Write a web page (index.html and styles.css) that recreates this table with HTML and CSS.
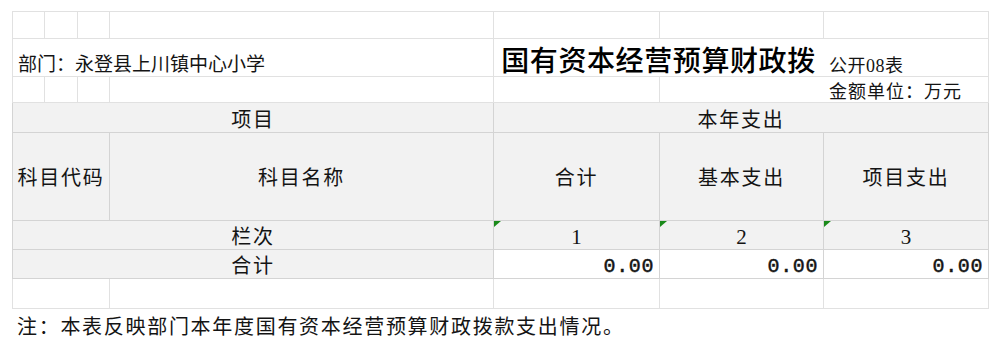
FILE: index.html
```html
<!DOCTYPE html>
<html lang="zh-CN">
<head>
<meta charset="utf-8">
<title>国有资本经营预算财政拨款支出表</title>
<link rel="stylesheet" href="styles.css">
</head>
<body>
<table class="sheet">
  <colgroup>
    <col class="c1"><col class="c2"><col class="c3"><col class="c4"><col class="c5"><col class="c6"><col class="c7">
  </colgroup>
  <tr class="r1">
    <td></td><td></td><td></td><td></td><td></td><td></td><td></td>
  </tr>
  <tr class="r2">
    <td colspan="4" class="dept">部门：永登县上川镇中心小学</td>
    <td colspan="2" class="title no-r">国有资本经营预算财政拨</td>
    <td class="code no-l">公开08表</td>
  </tr>
  <tr class="r3">
    <td></td><td></td><td></td><td></td><td></td><td class="no-r"></td>
    <td class="unit no-l">金额单位：万元</td>
  </tr>
  <tr class="r4 head">
    <td colspan="4">项目</td>
    <td colspan="3">本年支出</td>
  </tr>
  <tr class="r5 head">
    <td colspan="3">科目代码</td>
    <td>科目名称</td>
    <td>合计</td>
    <td>基本支出</td>
    <td>项目支出</td>
  </tr>
  <tr class="r6 head">
    <td colspan="4">栏次</td>
    <td class="flag"><span class="digit">1</span></td>
    <td class="flag"><span class="digit">2</span></td>
    <td class="flag"><span class="digit">3</span></td>
  </tr>
  <tr class="r7">
    <td colspan="4" class="gray">合计</td>
    <td class="num">0.00</td>
    <td class="num">0.00</td>
    <td class="num">0.00</td>
  </tr>
  <tr class="r8">
    <td colspan="3"></td><td></td><td></td><td></td><td></td>
  </tr>
</table>
<p class="note">注：本表反映部门本年度国有资本经营预算财政拨款支出情况。</p>
</body>
</html>
```

FILE: styles.css
```css
html, body {
  margin: 0;
  background: #ffffff;
}

body {
  padding: 11px 0 0 12px;
  font-family: "Liberation Serif", "Noto Sans CJK SC", serif;
  color: #141414;
}

.sheet {
  border-collapse: collapse;
  table-layout: fixed;
  width: 977px;
}

.c1 { width: 32px; }
.c2 { width: 33px; }
.c3 { width: 32px; }
.c4 { width: 384px; }
.c5 { width: 166px; }
.c6 { width: 164px; }
.c7 { width: 165px; }

.sheet td {
  border: 1px solid #e1e1e1;
  padding: 0;
  white-space: nowrap;
  overflow: visible;
  font-size: 20px;
  line-height: 1;
}

.sheet td.no-r { border-right-color: transparent; }
.sheet td.no-l { border-left-color: transparent; }

.r1 { height: 27px; }
.r2 { height: 38px; }
.r3 { height: 26px; }
.r4 { height: 30px; }
.r5 { height: 88px; }
.r6 { height: 29px; }
.r7 { height: 29px; }
.r8 { height: 30px; }

.sheet td.dept {
  vertical-align: bottom;
  padding: 0 0 2px 5px;
  font-size: 19px;
  letter-spacing: 0;
}

.sheet td.title {
  vertical-align: bottom;
  text-align: center;
  padding: 0 0 3px 0;
  font-family: "Noto Sans CJK SC", sans-serif;
  font-size: 28px;
  font-weight: 500;
  letter-spacing: 0.6px;
  color: #000;
}

.sheet td.code {
  vertical-align: bottom;
  padding: 0 0 1px 5px;
  font-size: 18px;
  letter-spacing: 0.5px;
}

.sheet td.unit {
  vertical-align: bottom;
  padding: 0 0 1px 5px;
  font-size: 18px;
  letter-spacing: 1px;
}

.head td,
.sheet td.gray {
  background: #f2f2f2;
  border-color: #d4d4d4;
  text-align: center;
  vertical-align: middle;
  padding-top: 4px;
  letter-spacing: 1.8px;
}

.r5 td { padding-top: 2px; }

.flag {
  position: relative;
}

.flag::before {
  content: "";
  position: absolute;
  left: 0;
  top: 0;
  width: 7px;
  height: 6px;
  background: #1a8a1a;
  clip-path: polygon(0 0, 100% 0, 0 100%);
}

.digit {
  font-family: "Liberation Serif", serif;
  font-size: 21px;
  letter-spacing: 0;
}

.sheet td.num {
  text-align: right;
  vertical-align: middle;
  padding: 5px 5px 0 0;
  font-family: "Liberation Mono", monospace;
  font-weight: normal;
  font-size: 20px;
  letter-spacing: 0.6px;
  -webkit-text-stroke: 0.5px #141414;
  border-color: #d4d4d4;
}

.r8 td {
  border-top-color: #d4d4d4;
}

.note {
  margin: 8px 0 0 5px;
  font-size: 20px;
  line-height: 1;
  letter-spacing: 1.7px;
}
```
